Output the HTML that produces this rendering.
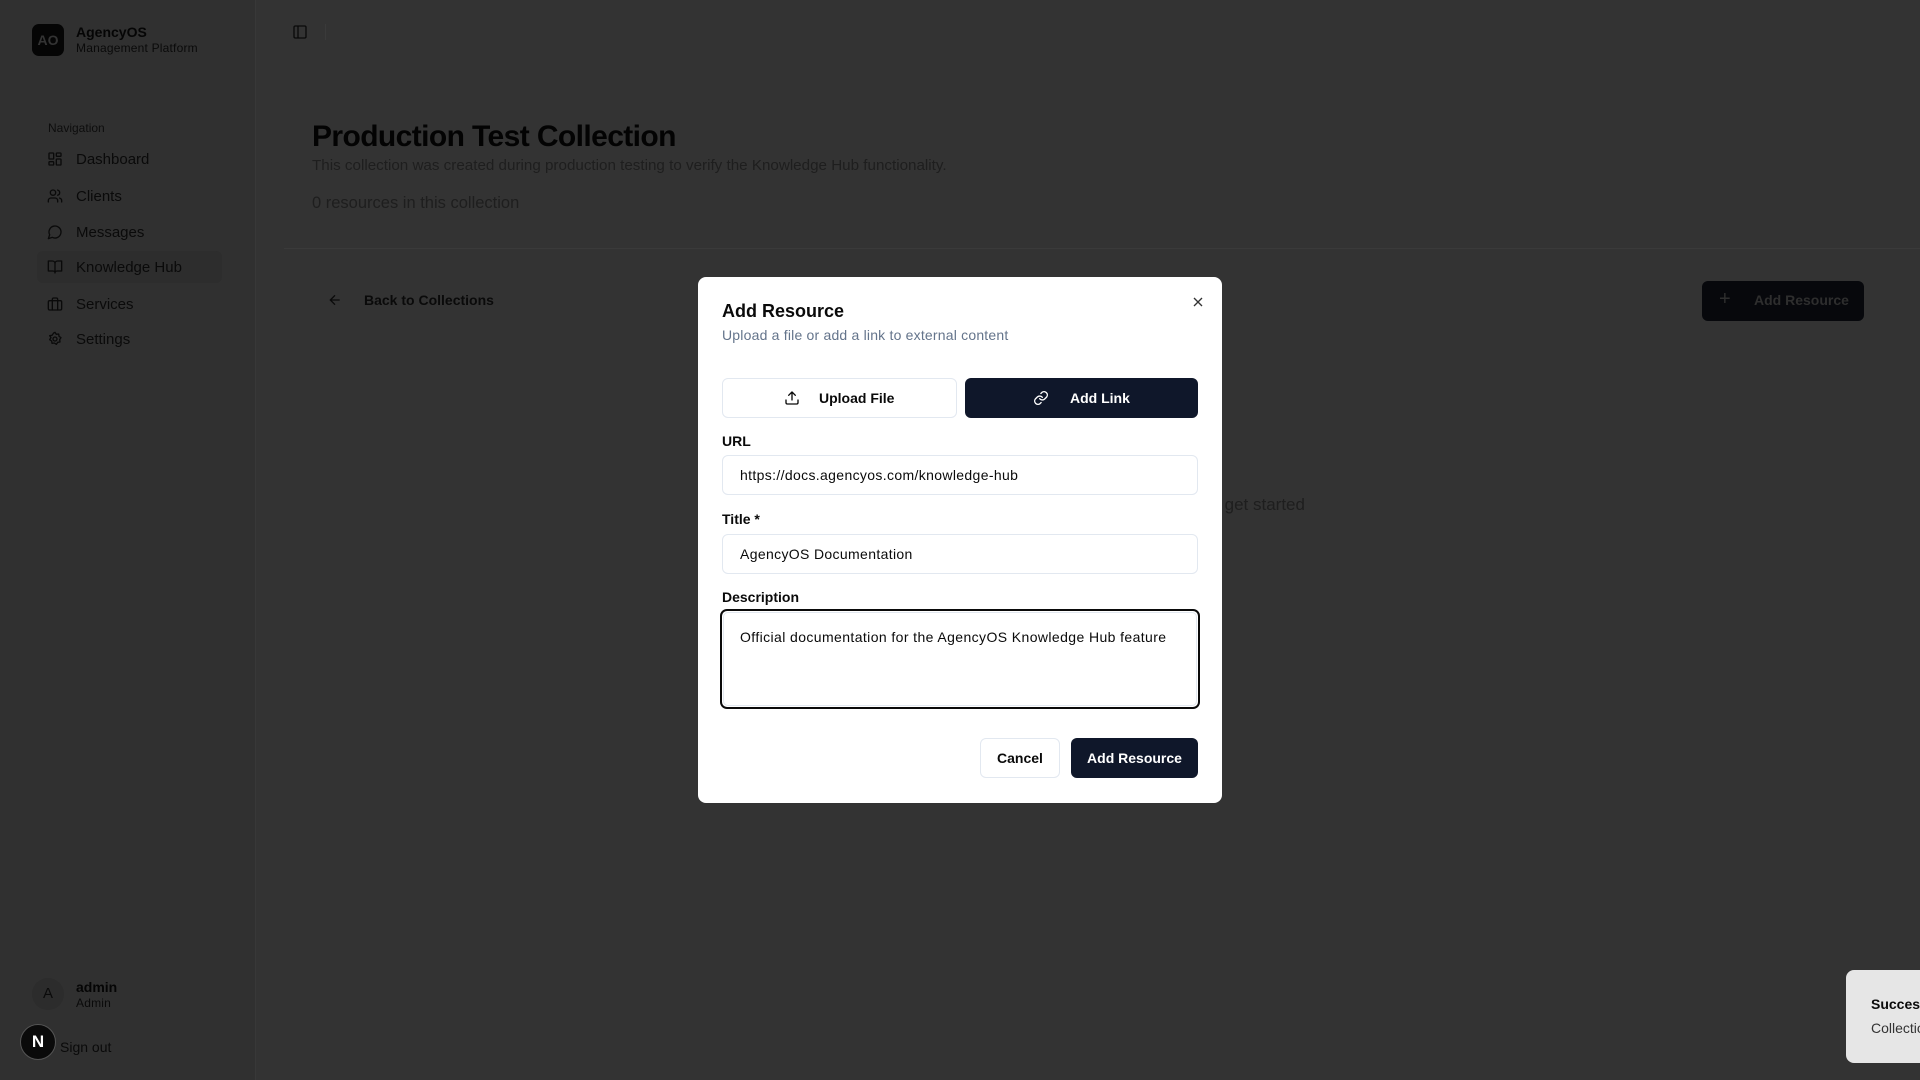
<!DOCTYPE html>
<html><head><meta charset="utf-8"><style>
*{box-sizing:border-box;margin:0;padding:0}
body{width:1920px;height:1080px;overflow:hidden;background:#333333;font-family:"Liberation Sans",sans-serif;position:relative;color:#0a0a0a}
.abs{position:absolute}
.side{left:0;top:0;width:256px;height:1080px;background:#303030;border-right:1px solid #383838}
.logo{left:32px;top:24px;width:32px;height:32px;border-radius:7px;background:#050505;color:#333;font-weight:bold;font-size:14px;display:flex;align-items:center;justify-content:center}
.t1{font-size:14px;font-weight:bold;color:#050505}
.t2{font-size:12px;color:#0a0a0a;letter-spacing:0.2px}
.nav{left:76px;font-size:15px;color:#0a0a0a}
.ic{left:47px;width:16px;height:16px}
.ic svg{width:16px;height:16px;fill:none;stroke:#0a0a0a;stroke-width:2;stroke-linecap:round;stroke-linejoin:round}
.main-t{left:312px;top:120px;font-size:30px;font-weight:bold;color:#030303;letter-spacing:-0.6px}
.modal{left:698px;top:277px;width:524px;height:526px;background:#fff;border-radius:8px}
.m{position:absolute}
.inp{left:24px;width:476px;height:40px;border:1px solid #e2e8f0;border-radius:6px;font-size:14px;padding-left:17px;line-height:38px;color:#0a0a0a;letter-spacing:0.35px}
.lbl{left:24px;font-size:14px;font-weight:bold;color:#0a0a0a}
</style></head><body>
<div class="abs side"></div>
<div class="abs logo">AO</div>
<div class="abs t1" style="left:76px;top:24px">AgencyOS</div>
<div class="abs t2" style="left:76px;top:41px">Management Platform</div>
<div class="abs" style="left:48px;top:121px;font-size:12px;color:#0d0d0d">Navigation</div>
<div class="abs" style="left:37px;top:251px;width:185px;height:32px;border-radius:6px;background:#2d2d2d"></div>
<div class="abs ic" style="top:151px"><svg viewBox="0 0 24 24"><rect x="3" y="3" width="7" height="9" rx="1"/><rect x="14" y="3" width="7" height="5" rx="1"/><rect x="14" y="12" width="7" height="9" rx="1"/><rect x="3" y="16" width="7" height="5" rx="1"/></svg></div>
<div class="abs nav" style="top:151px">Dashboard</div>
<div class="abs ic" style="top:188px"><svg viewBox="0 0 24 24"><path d="M16 21v-2a4 4 0 0 0-4-4H6a4 4 0 0 0-4 4v2"/><circle cx="9" cy="7" r="4"/><path d="M22 21v-2a4 4 0 0 0-3-3.87M16 3.13a4 4 0 0 1 0 7.75"/></svg></div>
<div class="abs nav" style="top:188px">Clients</div>
<div class="abs ic" style="top:224px"><svg viewBox="0 0 24 24"><path d="M7.9 20A9 9 0 1 0 4 16.1L2 22Z"/></svg></div>
<div class="abs nav" style="top:224px">Messages</div>
<div class="abs ic" style="top:259px"><svg viewBox="0 0 24 24"><path d="M2 3h6a4 4 0 0 1 4 4v14a3 3 0 0 0-3-3H2zM22 3h-6a4 4 0 0 0-4 4v14a3 3 0 0 1 3-3h7z"/></svg></div>
<div class="abs nav" style="top:259px">Knowledge Hub</div>
<div class="abs ic" style="top:296px"><svg viewBox="0 0 24 24"><rect x="2" y="7" width="20" height="14" rx="2"/><path d="M16 21V5a2 2 0 0 0-2-2h-4a2 2 0 0 0-2 2v16"/></svg></div>
<div class="abs nav" style="top:296px">Services</div>
<div class="abs ic" style="top:331px"><svg viewBox="0 0 24 24"><circle cx="12" cy="12" r="3"/><path d="M12 2l2 3 3.5-.5.5 3.5 3 2-2 3 .5 3.5-3.5.5-2 3-3-2-3.5.5-.5-3.5-3-2 2-3L4 7l3.5-.5L10 3z"/></svg></div>
<div class="abs nav" style="top:331px">Settings</div>
<div class="abs" style="left:32px;top:978px;width:32px;height:32px;border-radius:50%;background:#2c2c2c;font-size:15px;text-align:center;line-height:32px;color:#0a0a0a">A</div>
<div class="abs t1" style="left:76px;top:979px">admin</div>
<div class="abs t2" style="left:76px;top:996px">Admin</div>
<div class="abs" style="left:20px;top:1024px;width:36px;height:36px;border-radius:50%;background:#0a0a0a;border:1px solid #555;color:#fff;font-size:17px;font-weight:bold;text-align:center;line-height:34px">N</div>
<div class="abs" style="left:60px;top:1039px;font-size:14px;color:#0a0a0a">Sign out</div>
<div class="abs" style="left:292px;top:24px;width:16px;height:16px"><svg viewBox="0 0 24 24" width="16" height="16" fill="none" stroke="#0a0a0a" stroke-width="2"><rect x="3" y="3" width="18" height="18" rx="2"/><path d="M9 3v18"/></svg></div>
<div class="abs" style="left:325px;top:24px;width:1px;height:16px;background:#3a3a3a"></div>
<div class="abs main-t">Production Test Collection</div>
<div class="abs" style="left:312px;top:157px;font-size:15.2px;color:#1e1e1e">This collection was created during production testing to verify the Knowledge Hub functionality.</div>
<div class="abs" style="left:312px;top:194px;font-size:16.5px;color:#1e1e1e">0 resources in this collection</div>
<div class="abs" style="left:284px;top:248px;width:1636px;height:1px;background:#3a3a3a"></div>
<div class="abs" style="left:327px;top:292px;width:16px;height:16px"><svg viewBox="0 0 24 24" width="16" height="16" fill="none" stroke="#0a0a0a" stroke-width="2"><path d="M19 12H5M12 19l-7-7 7-7"/></svg></div>
<div class="abs" style="left:364px;top:292px;font-size:14px;font-weight:bold;color:#0a0a0a">Back to Collections</div>
<div class="abs" style="left:1702px;top:281px;width:162px;height:40px;border-radius:6px;background:#07080c"></div>
<div class="abs" style="left:1719px;top:288px;font-size:20px;color:#2e2e2e">+</div>
<div class="abs" style="left:1754px;top:292px;font-size:14px;font-weight:bold;color:#2e2e2e">Add Resource</div>
<div class="abs" style="left:1030px;top:495px;font-size:17px;color:#1e1e1e">Add your first resource to get started</div>
<div class="abs" style="left:1846px;top:970px;width:90px;height:93px;border-radius:8px;background:#e6e6e6"></div>
<div class="abs" style="left:1871px;top:996px;font-size:14px;font-weight:bold;color:#0a0a0a">Success</div>
<div class="abs" style="left:1871px;top:1020px;font-size:14px;color:#333">Collection</div>

<div class="abs modal">
<div class="m" style="left:24px;top:24px;font-size:18px;font-weight:bold;color:#0a0a0a">Add Resource</div>
<div class="m" style="left:24px;top:50px;font-size:14px;color:#64748b;letter-spacing:0.2px">Upload a file or add a link to external content</div>
<div class="m" style="left:492px;top:17px"><svg width="16" height="16" viewBox="0 0 24 24" fill="none" stroke="#333" stroke-width="2"><path d="M18 6L6 18M6 6l12 12"/></svg></div>
<div class="m" style="left:24px;top:101px;width:235px;height:40px;border:1px solid #e2e8f0;border-radius:6px"></div>
<div class="m" style="left:86px;top:113px"><svg width="16" height="16" viewBox="0 0 24 24" fill="none" stroke="#0a0a0a" stroke-width="2" stroke-linecap="round"><path d="M21 15v4a2 2 0 0 1-2 2H5a2 2 0 0 1-2-2v-4M17 8l-5-5-5 5M12 3v12"/></svg></div>
<div class="m" style="left:121px;top:113px;font-size:14px;font-weight:bold">Upload File</div>
<div class="m" style="left:267px;top:101px;width:233px;height:40px;background:#0f172a;border-radius:6px"></div>
<div class="m" style="left:335px;top:113px"><svg width="16" height="16" viewBox="0 0 24 24" fill="none" stroke="#fff" stroke-width="2" stroke-linecap="round"><path d="M10 13a5 5 0 0 0 7.5.5l3-3a5 5 0 0 0-7-7l-1.7 1.7M14 11a5 5 0 0 0-7.5-.5l-3 3a5 5 0 0 0 7 7l1.7-1.7"/></svg></div>
<div class="m" style="left:372px;top:113px;font-size:14px;font-weight:bold;color:#fff">Add Link</div>
<div class="m lbl" style="top:156px">URL</div>
<div class="m inp" style="top:178px">https://docs.agencyos.com/knowledge-hub</div>
<div class="m lbl" style="top:234px">Title *</div>
<div class="m inp" style="top:257px">AgencyOS Documentation</div>
<div class="m lbl" style="top:312px">Description</div>
<div class="m" style="left:22px;top:332px;width:480px;height:100px;border:2px solid #0a0a0a;border-radius:7px;padding:1px"><div style="width:100%;height:100%;border:1px solid #e2e8f0;border-radius:5px;font-size:14px;padding:16px 16px;color:#0a0a0a;letter-spacing:0.4px">Official documentation for the AgencyOS Knowledge Hub feature</div></div>
<div class="m" style="left:282px;top:461px;width:80px;height:40px;border:1px solid #e2e8f0;border-radius:6px;font-size:14px;font-weight:bold;text-align:center;line-height:38px">Cancel</div>
<div class="m" style="left:373px;top:461px;width:127px;height:40px;background:#0f172a;border-radius:6px;font-size:14px;font-weight:bold;color:#fff;text-align:center;line-height:40px">Add Resource</div>
</div>
</body></html>
